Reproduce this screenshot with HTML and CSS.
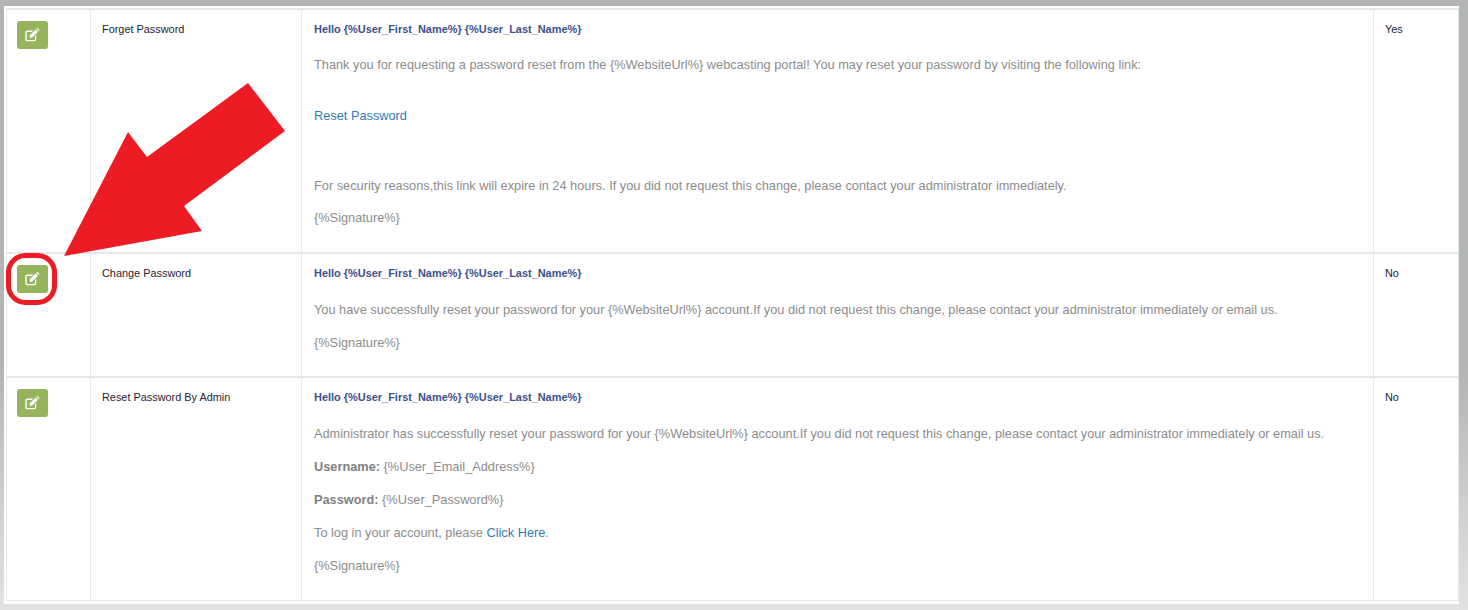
FILE: index.html
```html
<!DOCTYPE html>
<html lang="en">
<head>
<meta charset="utf-8">
<title>Email templates</title>
<link rel="stylesheet" href="styles.css">
</head>
<body>
<svg width="0" height="0" class="defs"><defs>
<symbol id="edit" viewBox="0 0 15 14">
<path d="M2.2 2.500H8.300L6.900 3.900H2.600Q1.700 3.900 1.700 4.800V11Q1.700 11.900 2.600 11.900H9Q9.900 11.900 9.900 11V8.200L11.300 6.800V11.300Q11.300 13.300 9.300 13.300H2.200Q.3 13.300 .3 11.300V4.500Q.3 2.500 2.200 2.500Z" fill="#fff"/>
<path d="M4.700 7.300L10.600 1.400L13 3.800L7.100 9.700H4.700Z M11.300 .7L11.900 .2Q12.300 -.1 12.700 .2L14.300 1.800Q14.600 2.200 14.300 2.600L13.700 3.100Z" fill="#fff"/>
</symbol>
</defs></svg>
<main class="sheet">
<table class="grid">
<colgroup><col class="c-act"><col class="c-name"><col class="c-body"><col class="c-flag"></colgroup>
<tbody>
<tr class="row-a">
<td><a class="edit"><svg class="ico"><use href="#edit"/></svg></a></td>
<td class="name">Forget Password</td>
<td class="body">
<h4>Hello {%User_First_Name%} {%User_Last_Name%}</h4>
<p>Thank you for requesting a password reset from the {%WebsiteUrl%} webcasting portal! You may reset your password by visiting the following link:</p>
<p class="gap1"><a class="lnk">Reset Password</a></p>
<p class="gap2">For security reasons,this link will expire in 24 hours. If you did not request this change, please contact your administrator immediately.</p>
<p>{%Signature%}</p>
</td>
<td class="name">Yes</td>
</tr>
<tr class="row-b">
<td><a class="edit"><svg class="ico"><use href="#edit"/></svg></a></td>
<td class="name">Change Password</td>
<td class="body">
<h4>Hello {%User_First_Name%} {%User_Last_Name%}</h4>
<p>You have successfully reset your password for your {%WebsiteUrl%} account.If you did not request this change, please contact your administrator immediately or email us.</p>
<p>{%Signature%}</p>
</td>
<td class="name">No</td>
</tr>
<tr class="row-c">
<td><a class="edit"><svg class="ico"><use href="#edit"/></svg></a></td>
<td class="name">Reset Password By Admin</td>
<td class="body">
<h4>Hello {%User_First_Name%} {%User_Last_Name%}</h4>
<p>Administrator has successfully reset your password for your {%WebsiteUrl%} account.If you did not request this change, please contact your administrator immediately or email us.</p>
<p><b>Username:</b> {%User_Email_Address%}</p>
<p><b>Password:</b> {%User_Password%}</p>
<p>To log in your account, please <a class="lnk">Click Here</a>.</p>
<p>{%Signature%}</p>
</td>
<td class="name">No</td>
</tr>
</tbody>
</table>
</main>
<svg class="mark" width="1468" height="610" viewBox="0 0 1468 610">
<polygon points="248,83 285,131 184,206 202,231 64,256 128,132 147,157" fill="#ed1c24"/>
<rect x="8.500" y="255.500" width="46" height="47" rx="17" fill="none" stroke="#ed1c24" stroke-width="5"/>
</svg>
</body>
</html>
```
FILE: styles.css
```css
html, body { margin: 0; padding: 0; }
body {
  height: 610px;
  overflow: hidden;
  position: relative;
  background: linear-gradient(#b3b5b3 0, #b3b5b3 60%, #e2e2e2 100%);
  font-family: "Liberation Sans", Arial, sans-serif;
}
.defs { position: absolute; }
.sheet {
  margin: 6px 9px 0 4px;
  height: 598px;
  box-sizing: border-box;
  padding: 2px 0 0 2px;
  background: #fff;
}
.grid {
  width: 1452px;
  table-layout: fixed;
  border-collapse: collapse;
  border-top: 2px solid #e4e7ec;
}
.c-act { width: 84px; }
.c-name { width: 211px; }
.c-body { width: 1072px; }
.c-flag { width: 85px; }
.grid td {
  vertical-align: top;
  padding: 11px 11px 0;
  border: 1px solid #e6e9ee;
  border-top: 2px solid #e4e7ec;
}
.grid tr:first-child td { border-top: 0; }
.grid td:first-child { padding: 11px 11px 11px 10px; }
.grid td.body { padding-left: 12px; }
.row-a { height: 244px; }
.row-b { height: 124px; }
.row-c { height: 223px; }
.edit {
  display: flex;
  align-items: center;
  justify-content: center;
  width: 31px;
  height: 28px;
  border-radius: 3px;
  background: #94b55b;
}
.ico { width: 15px; height: 14px; }
.grid .name {
  font-size: 10.9px;
  line-height: 16px;
  color: #1f2430;
}
.grid .body {
  font-size: 12.77px;
  line-height: 18px;
  color: #8c8c8c;
}
.body h4 {
  margin: 0 0 20px;
  font-size: 10.95px;
  line-height: 16px;
  font-weight: bold;
  color: #3c4f8c;
}
.row-a .body h4 { margin-bottom: 19px; }
.body p { margin: 0 0 15px; }
.body b { color: #808080; }
.body .gap1 { margin-top: 33px; }
.body .gap2 { margin-top: 52px; margin-bottom: 14px; }
.lnk { color: #337ab7; }
.mark { position: absolute; left: 0; top: 0; pointer-events: none; }
```
